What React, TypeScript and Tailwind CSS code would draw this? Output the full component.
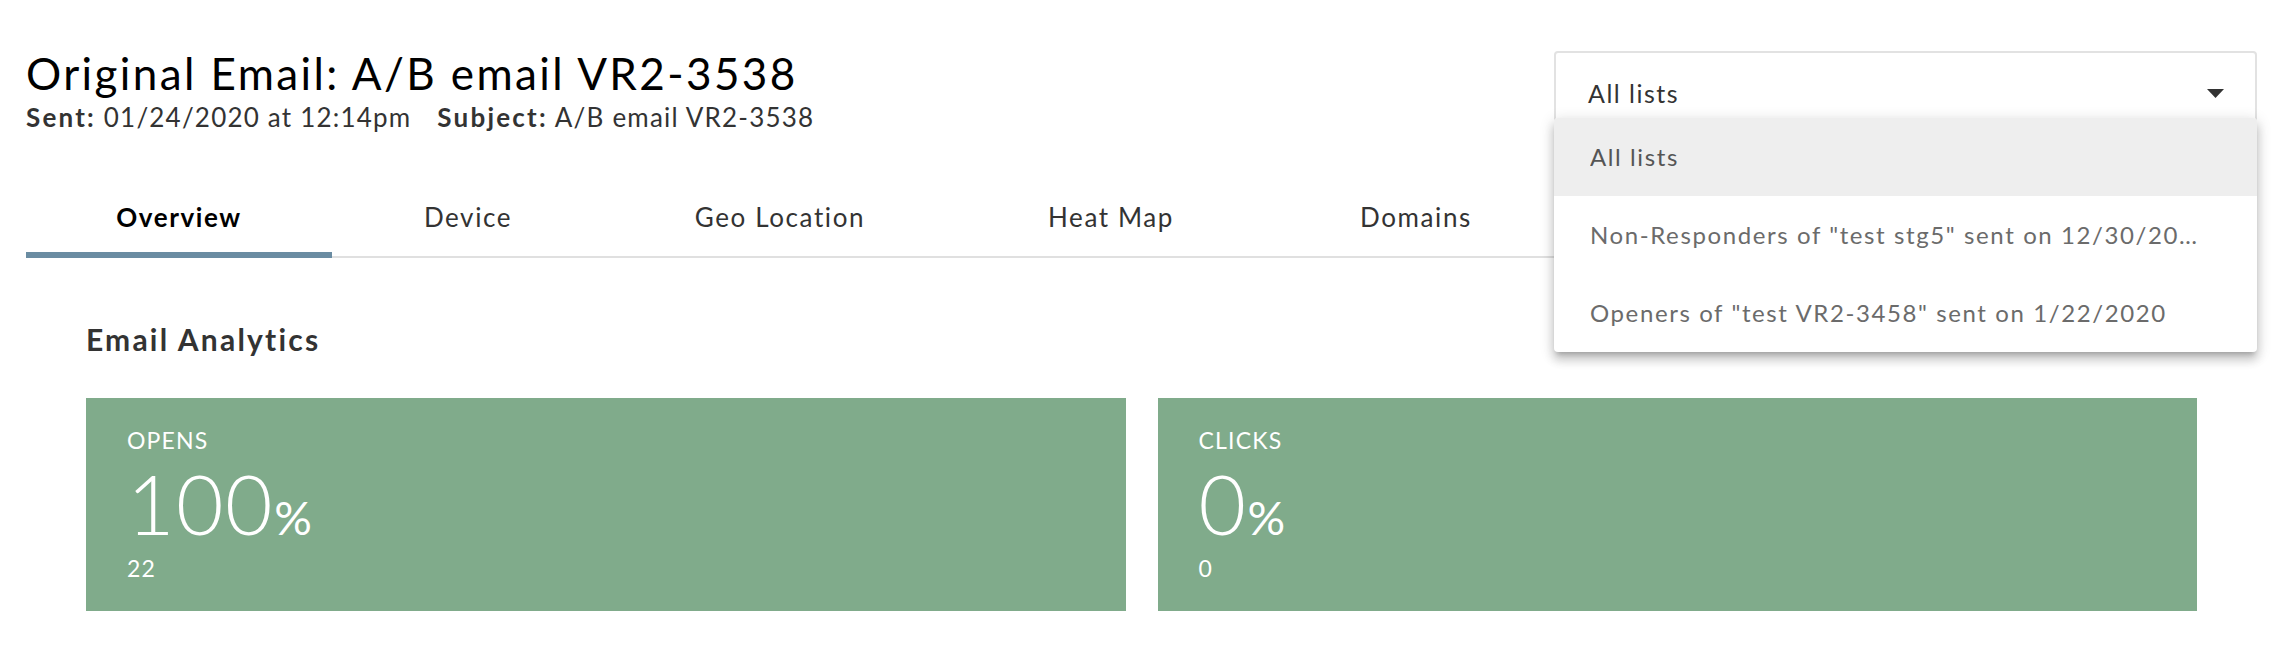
import React from 'react';

const TABS = [
  { label: 'Overview', width: 'w-[306px]', active: true },
  { label: 'Device', width: 'w-[272px]', active: false },
  { label: 'Geo Location', width: 'w-[352px]', active: false },
  { label: 'Heat Map', width: 'w-[310px]', active: false },
  { label: 'Domains', width: 'w-[300px]', active: false },
];

const LISTS = ['All lists', 'Non-Responders of "test stg5" sent on 12/30/2019', 'Openers of "test VR2-3458" sent on 1/22/2020'];

function StatCard({ label, value, count }: { label: string; value: string; count: string }) {
  return (
    <div className="h-[213px] bg-[#80ab8b] pl-[41px] pt-[31px] text-white">
      <div className="text-[23px] leading-none tracking-[1.2px]">{label}</div>
      <div className="mt-[10px] flex items-baseline">
        <span className="text-[82px] font-light leading-none tracking-[1.5px]">{value}</span>
        <span className="text-[47px] leading-none">%</span>
      </div>
      <div className="mt-[13px] text-[23px] leading-none tracking-[1.2px]">{count}</div>
    </div>
  );
}

export default function App() {
  return (
    <div className="min-h-screen bg-white pl-[26px] pr-[23px] pt-[51px] font-['Lato',sans-serif]">
      <div className="flex items-start justify-between">
        <div>
          <h1 className="text-[44px] font-normal leading-none tracking-[2.4px] text-black">Original Email: A/B email VR2-3538</h1>
          <p className="mt-[9px] text-[26px] leading-none tracking-[1.2px] text-[#333]">
            <span className="font-bold tracking-[2.2px]">Sent:</span> 01/24/2020 at 12:14pm
            <span className="ml-[26px] font-bold tracking-[2.2px]">Subject:</span> A/B email VR2-3538
          </p>
        </div>

        <div className="relative w-[703px]">
          <div className="flex h-[84px] items-center justify-between rounded-[4px] border-2 border-[#e2e2e2] pl-[32px] pr-[31px]">
            <span className="text-[25px] leading-none tracking-[1.5px] text-[#333]">All lists</span>
            <svg width="17" height="9" viewBox="0 0 17 9"><polygon points="0,0 17,0 8.5,9" fill="#333" /></svg>
          </div>
          <div className="absolute left-0 right-0 top-[67px] z-10 overflow-hidden rounded-[4px] bg-white shadow-[0_5px_5px_-3px_rgba(0,0,0,0.2),0_8px_10px_1px_rgba(0,0,0,0.14),0_3px_14px_2px_rgba(0,0,0,0.12)]">
            {LISTS.map((l, i) => (
              <div key={l} className={`flex h-[78px] items-center pl-[36px] pr-[52px] ${i === 0 ? 'bg-[#eeeeee] text-[#555]' : 'text-[#6b6b6b]'}`}>
                <span className="truncate text-[24px] leading-[1.2] tracking-[1.6px]">{l}</span>
              </div>
            ))}
          </div>
        </div>
      </div>

      <div className="mt-[69px] flex border-b-2 border-[#e0e0e0]">
        {TABS.map(t => (
          <div key={t.label} className={`relative ${t.width} pb-[26px] text-center text-[26px] leading-none tracking-[1.6px] ${t.active ? 'font-bold text-black' : 'text-[#333]'}`}>
            {t.label}
            {t.active && <span className="absolute bottom-[-2px] left-0 right-0 h-[6px] bg-[#6a8ca2]" />}
          </div>
        ))}
      </div>

      <div className="px-[60px] pb-[40px]">
        <h2 className="mt-[66px] text-[30px] font-bold leading-none tracking-[2.2px] text-[#333]">Email Analytics</h2>
        <div className="mt-[44px] grid grid-cols-2 gap-[32px]">
          <StatCard label="OPENS" value="100" count="22" />
          <StatCard label="CLICKS" value="0" count="0" />
        </div>
      </div>
    </div>
  );
}
